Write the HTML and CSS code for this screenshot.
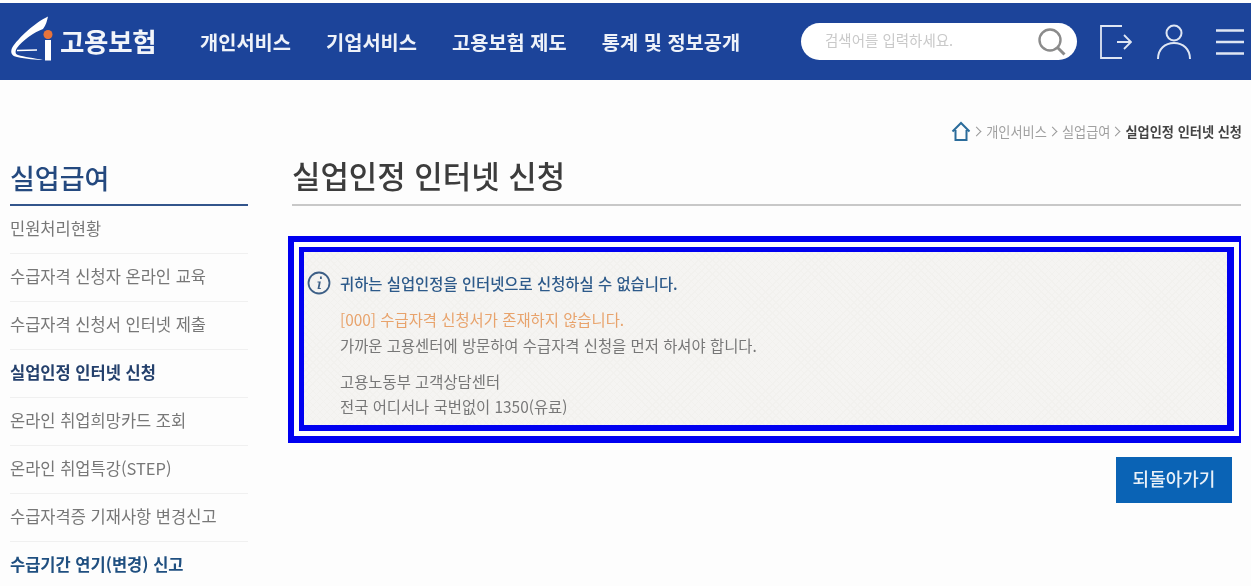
FILE: index.html
```html
<!DOCTYPE html>
<html lang="ko">
<head>
    <meta charset="UTF-8">
    <title>실업인정 인터넷 신청 - 고용보험</title>
    <link rel="stylesheet" href="styles.css">
</head>
<body>
    <header class="header">
        <a class="logo" href="#">
            <svg class="logo-mark" width="44" height="48" viewBox="0 0 44 48">
                <path d="M38 2.500C26 8 8 24 2 34c-2 5 0 8 5 9 9 2 19 3 26 3-9-2-19-3-25-5-3-1-3-4-1-7 5-7 17-16 26-19 3-4 4-8 5-12.500z" fill="#fff"/>
                <path d="M7 36.500l20-.5" stroke="#fff" stroke-width="1.500" fill="none"/>
                <circle cx="38" cy="20.500" r="4.500" fill="#e8743b"/>
                <rect x="35" y="26" width="6" height="20.500" fill="#fff"/>
            </svg>
            <span class="logo-text">고용보험</span>
        </a>
        <nav class="nav">
            <a href="#">개인서비스</a>
            <a href="#">기업서비스</a>
            <a href="#">고용보험 제도</a>
            <a href="#">통계 및 정보공개</a>
        </nav>
        <div class="search">
            <span class="search-hint">검색어를 입력하세요.</span>
            <svg width="30" height="30" viewBox="0 0 30 30" fill="none" stroke="#8b8b8b" stroke-width="2.400">
                <circle cx="13" cy="13" r="10.500"/>
                <path d="M20.500 20.500l7 7" stroke-width="3"/>
            </svg>
        </div>
        <div class="tools">
            <svg width="32" height="34" viewBox="0 0 32 34" fill="none" stroke="#dfe6f3" stroke-width="1.800">
                <path d="M22 1H1v32h21"/>
                <path d="M17 17h14M24 10l7 7-7 7"/>
            </svg>
            <svg width="34" height="36" viewBox="0 0 34 36" fill="none" stroke="#dfe6f3" stroke-width="2">
                <circle cx="17" cy="9" r="7.500"/>
                <path d="M1 35c0-10 7-16 16-16s16 6 16 16"/>
            </svg>
            <svg width="28" height="26" viewBox="0 0 28 26" stroke="#dfe6f3" stroke-width="2.400">
                <path d="M0 1.500h28M0 13h28M0 24.500h28"/>
            </svg>
        </div>
    </header>

    <div class="crumbs">
        <svg width="20" height="21" viewBox="0 0 20 21" fill="none" stroke="#2b6c9b" stroke-width="2">
            <path d="M1.500 10.500L10 2l8.500 8.500M4.500 9v10h11V9"/>
        </svg>
        <i class="sep"></i>
        <span>개인서비스</span>
        <i class="sep"></i>
        <span>실업급여</span>
        <i class="sep"></i>
        <strong>실업인정 인터넷 신청</strong>
    </div>

    <div class="layout">
        <aside class="side">
            <h2 class="side-title">실업급여</h2>
            <ul class="side-menu">
                <li>민원처리현황</li>
                <li>수급자격 신청자 온라인 교육</li>
                <li>수급자격 신청서 인터넷 제출</li>
                <li class="active">실업인정 인터넷 신청</li>
                <li>온라인 취업희망카드 조회</li>
                <li>온라인 취업특강(STEP)</li>
                <li>수급자격증 기재사항 변경신고</li>
                <li class="strong">수급기간 연기(변경) 신고</li>
            </ul>
        </aside>
        <main class="content">
            <h1 class="page-title">실업인정 인터넷 신청</h1>
            <div class="mark-outer">
                <div class="mark-inner">
                    <div class="notice">
                        <p class="notice-head">
                            <svg width="24" height="24" viewBox="0 0 24 24" fill="none">
                                <circle cx="12" cy="12" r="10.500" stroke="#3d5f86" stroke-width="1.800"/>
                                <path d="M13 5.500h1.800v2.400H13zM10.500 10.500h3.300l-1.300 6.500h1.300v1h-3.300l1.300-6.500h-1.300z" fill="#3d5f86"/>
                            </svg>
                            귀하는 실업인정을 인터넷으로 신청하실 수 없습니다.
                        </p>
                        <p class="notice-error">[000] 수급자격 신청서가 존재하지 않습니다.</p>
                        <p class="notice-line">가까운 고용센터에 방문하여 수급자격 신청을 먼저 하셔야 합니다.</p>
                        <p class="notice-line notice-gap">고용노동부 고객상담센터</p>
                        <p class="notice-line">전국 어디서나 국번없이 1350(유료)</p>
                    </div>
                </div>
            </div>
            <div class="actions">
                <a class="btn" href="#">되돌아가기</a>
            </div>
        </main>
    </div>
</body>
</html>
```

FILE: styles.css
```css
html, body {
    height: 586px;
    overflow: hidden;
}

body {
    margin: 0;
    padding-top: 3px;
    box-sizing: border-box;
    background: #fdfdfd;
    color: #666;
    font-family: "Noto Sans CJK KR", "Noto Sans", sans-serif;
}

a {
    color: inherit;
    text-decoration: none;
}

/* the source picture is soft, the blue marker round the notice is not */
.header,
.crumbs,
.side,
.page-title,
.notice,
.btn {
    filter: blur(0.4px);
}

.header {
    display: flex;
    align-items: center;
    height: 77px;
    background: #1c449a;
    color: #fff;
    padding-left: 10px;
}

.logo {
    display: flex;
    align-items: center;
    flex: none;
    width: 190px;
}

.logo-mark {
    margin-bottom: 8px;
}

.logo-text {
    margin: 0 0 2px 6px;
    font-size: 26.500px;
    font-weight: 700;
    letter-spacing: -0.3px;
    color: #f2f5fa;
}

.nav {
    display: flex;
    flex: none;
    gap: 35px;
    width: 601px;
    margin-bottom: 1px;
    font-size: 19.800px;
    font-weight: 700;
    color: #eef2f9;
}

.search {
    display: flex;
    flex: none;
    align-items: center;
    justify-content: space-between;
    box-sizing: border-box;
    width: 276px;
    height: 37px;
    padding: 0 10px 0 24px;
    background: #fff;
    border-radius: 19px;
}

.search-hint {
    margin-bottom: 4px;
    font-size: 14.500px;
    color: #c9c9c9;
}

.tools {
    display: flex;
    flex: none;
    align-items: center;
    gap: 25px;
    margin-left: 23px;
}

.crumbs {
    display: flex;
    align-items: center;
    justify-content: flex-end;
    gap: 3px;
    height: 20px;
    margin-top: 41px;
    padding-right: 9px;
    font-size: 13.200px;
    color: #a0a0a0;
}

.crumbs strong {
    color: #444;
    font-weight: 700;
}

.sep {
    width: 6px;
    height: 6px;
    margin: 0 3px 0 -1px;
    border: solid #999;
    border-width: 1px 1px 0 0;
    transform: rotate(45deg);
}

.layout {
    display: flex;
    padding: 0 10px;
}

.side {
    flex: none;
    width: 238px;
    margin-right: 44px;
}

.side-title {
    height: 55px;
    margin: 10px 0 0;
    border-bottom: 2px solid #33558c;
    box-sizing: border-box;
    font-size: 27px;
    line-height: 54px;
    font-weight: 500;
    color: #24497f;
}

.side-menu {
    margin: 0;
    padding: 0;
    list-style: none;
}

.side-menu li {
    height: 48px;
    box-sizing: border-box;
    border-bottom: 1px solid #f0f0f0;
    font-size: 16.500px;
    line-height: 44px;
    color: #777;
}

.side-menu .active {
    font-weight: 700;
    color: #24406c;
}

.side-menu .strong {
    font-weight: 700;
    color: #1f4f80;
}

.content {
    flex: 1;
    min-width: 0;
}

.page-title {
    height: 55px;
    margin: 10px 0 0;
    box-sizing: border-box;
    border-bottom: 2px solid #c8c8c8;
    font-size: 30.900px;
    line-height: 47px;
    font-weight: 500;
    color: #3c3c3c;
}

.mark-outer {
    margin: 30px 0 0 -4px;
    padding: 5px;
    border: solid #0000f0;
    border-width: 6px 2px 7px 6px;
}

.mark-inner {
    border: solid #0000f0;
    border-width: 5px 7px 6px 5px;
}

.notice {
    height: 173px;
    box-sizing: border-box;
    padding: 18px 0 0 36px;
    background-color: #f5f4f2;
    background-image: repeating-linear-gradient(45deg, #f2f1ee 0 1px, transparent 1px 5px),
        repeating-linear-gradient(-45deg, #f2f1ee 0 1px, transparent 1px 5px);
    font-size: 15.400px;
}

.notice p {
    margin: 0;
}

.notice-head {
    position: relative;
    height: 26px;
    line-height: 26px;
    font-weight: 500;
    color: #2d5a8a;
}

.notice-head svg {
    position: absolute;
    left: -33px;
    top: 1px;
}

.notice .notice-error {
    margin-top: 10px;
    line-height: 26px;
    color: #e8a36c;
}

.notice-line {
    line-height: 26px;
    color: #777;
}

.notice .notice-gap {
    margin-top: 10px;
    margin-bottom: -1px;
}

.actions {
    display: flex;
    justify-content: flex-end;
    margin-top: 14px;
    padding-right: 9px;
}

.btn {
    width: 116px;
    height: 46px;
    line-height: 43px;
    text-align: center;
    background: #0a63b5;
    color: #e8f0f8;
    font-size: 18px;
    font-weight: 500;
}
```
